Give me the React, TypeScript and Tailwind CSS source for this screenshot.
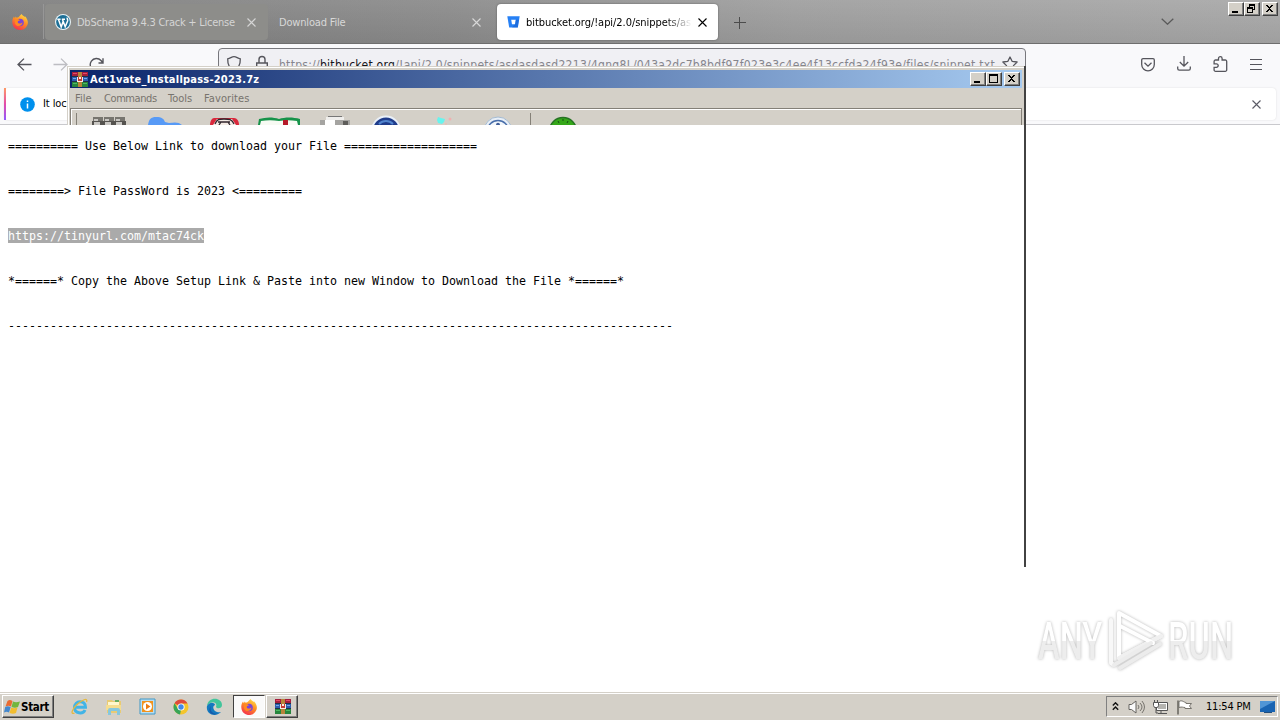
import React from "react";

const ui = "font-['DejaVu_Sans_Condensed','DejaVu_Sans',sans-serif]";

function Firefox({ size }: { size: number }) {
  return (
    <svg width={size} height={size} viewBox="0 0 16 16" className="shrink-0">
      <defs>
        <linearGradient id="fx" x1="0.8" y1="0" x2="0.3" y2="1">
          <stop offset="0" stopColor="#ffe14a" />
          <stop offset="0.45" stopColor="#ff9022" />
          <stop offset="1" stopColor="#f5304e" />
        </linearGradient>
      </defs>
      <path d="M8 1.6 9.6 0c.5 1.3 1.8 1.7 2.8 2.8 0 0 .6 0 .6-.6 3.5 3.7 3.8 8 1 11A7.7 7.7 0 0 1 .8 11C-.2 8 .2 5 2 2.5l.8 1.7 1-1.7.8 1.3C5.500 3.500 7 3.500 8 1.600Z" fill="url(#fx)" />
      <circle cx="8" cy="8.500" r="3.800" fill="#7b45d6" />
      <path d="M3 6c2-1.800 4-1 5 .5-1.500 0-2.500.8-2.200 2 .4 1.500 3.400 1.500 4.600-.2.300 3-3.400 4.700-5.800 3.200C3 10.500 2.500 8 3 6Z" fill="#ff8a20" />
    </svg>
  );
}

function Wordpress() {
  return (
    <svg width="16" height="16" viewBox="0 0 16 16" className="shrink-0">
      <circle cx="8" cy="8" r="8" fill="#e8f4f8" />
      <circle cx="8" cy="8" r="6.900" fill="#1d6f96" />
      <path d="M2.300 5.200h3.300M6.800 5.200h3.200M3.400 5.200 6.200 13 8.200 7.200M7.400 5.200l2.800 7.600L12.600 7c.5-1.500-.6-2-.4-3.400" fill="none" stroke="#fff" strokeWidth="1.500" />
    </svg>
  );
}

function Bitbucket() {
  return (
    <svg width="13" height="12" viewBox="0 0 13 12" className="shrink-0">
      <path d="M.3.300h12.400l-1.900 11.200H2.200Z" fill="#2680f5" />
      <path d="M4.200 3.800h4.600L8 8.200H5Z" fill="#fff" />
      <path d="M8.800 3.800h3.200l-1.200 7.700H5L8 8.200Z" fill="#1259c8" opacity=".5" />
    </svg>
  );
}

function Cross({ className = "" }: { className?: string }) {
  return (
    <svg width="9" height="9" viewBox="0 0 9 9" className={`shrink-0 ${className}`}>
      <path d="m.500.500 8 8M8.500.500l-8 8" fill="none" stroke="currentColor" strokeWidth="1.100" />
    </svg>
  );
}

function WinButton({ kind }: { kind: "min" | "max" | "restore" | "close" }) {
  return (
    <span className="block h-[14px] w-4 border border-t-white border-l-white border-r-[#404040] border-b-[#404040] bg-[#d4d0c8] shadow-[inset_-1px_-1px_0_#808080]">
      <svg width="14" height="12" viewBox="0 0 14 12" shapeRendering="crispEdges">
        {kind === "min" && <path d="M3 8h6v2H3z" />}
        {kind === "max" && <path d="M2 1h9v9H2zM3 3v6h7V3z" fillRule="evenodd" />}
        {kind === "restore" && <path fillRule="evenodd" d="M4 1h6v6H8v3H2V4h2zM5 3v1h3v2h1V3zM3 6v3h4V6z" />}
        {kind === "close" && <path d="M3 2h2v1h1v1h1V3h1V2h2v1H9v1H8v1H7v1h1v1h1v1h1v1H8V8H7V7H6v1H5v1H3V8h1V7h1V6h1V5H5V4H4V3H3z" />}
      </svg>
    </span>
  );
}

function WinRar({ w, h }: { w: number; h: number }) {
  return (
    <svg width={w} height={h} viewBox="0 0 16 15" className="shrink-0" shapeRendering="crispEdges">
      <path d="M0 0h16v5H0z" fill="#a51d3c" />
      <path d="M0 5h16v5H0z" fill="#2a5eaf" />
      <path d="M0 10h16v5H0z" fill="#26853d" />
      <path d="M1 1h4v1H1zM11 1h4v1h-4z" fill="#e44b65" />
      <path d="M1 6h3v1H1zM12 6h3v1h-3z" fill="#79a6e6" />
      <path d="M1 11h4v1H1zM11 11h4v1h-4z" fill="#4fb960" />
      <path d="M0 4h16v1H0zM0 9h16v1H0z" fill="#222f45" />
      <path d="M6 0h4v15H6z" fill="#b8843a" />
      <path d="M5 5h6v5H5z" fill="#c33a35" />
      <path d="M5 5h1v4h4V5h1v5H5zM7 5h2v2H7z" fill="#f8ece4" />
    </svg>
  );
}

function BrowserTabs() {
  return (
    <div className="flex h-[44px] shrink-0 border-b border-[#6e6e6e] bg-[linear-gradient(180deg,rgba(255,255,255,0.06),rgba(0,0,0,0.06)),linear-gradient(90deg,#808080_0%,#8c8c8c_35%,#a0a0a0_62%,#a9a9a9_100%)]">
      <div className="flex w-[43px] shrink-0 items-center pl-3"><Firefox size={16} /></div>
      <div className="my-1 w-px shrink-0 bg-[#979797]" />
      <div className="mt-1 ml-px flex h-9 w-[223px] shrink-0 items-center rounded-sm bg-[#8d8d8a] pl-[10px] text-[#d5d5d5]">
        <Wordpress />
        <span className={`${ui} mt-[2px] ml-[6px] w-[159px] text-[11px] tracking-[-0.25px] whitespace-nowrap`}>DbSchema 9.4.3 Crack + License</span>
        <Cross className="ml-[11px]" />
      </div>
      <div className="mt-1 flex h-9 w-[229px] shrink-0 items-center pl-[11px] text-[#d8d8d8]">
        <span className={`${ui} mt-[2px] w-[193px] text-[11px] tracking-[-0.18px]`}>Download File</span>
        <Cross />
      </div>
      <div className="mt-1 flex h-9 w-[221px] shrink-0 items-center rounded bg-white pl-[10px] shadow-[0_0_2px_#555]">
        <Bitbucket />
        <span className={`${ui} mt-[2px] ml-[6px] w-[166px] bg-[linear-gradient(90deg,#000_84%,#fff_100%)] bg-clip-text text-[11px] tracking-[-0.05px] whitespace-nowrap text-transparent`}>bitbucket.org/!api/2.0/snippets/as</span>
        <Cross className="ml-[6px] text-black" />
      </div>
      <svg width="12" height="12" viewBox="0 0 12 12" className="mt-[17px] ml-4 shrink-0"><path d="M0 5.500h12M5.500 0v12" stroke="#4c4c4c" /></svg>
      <svg width="13" height="7" viewBox="0 0 13 7" className="mt-[18px] ml-[415px] shrink-0"><path d="m.7.700 5.800 5.500L12.300.700" fill="none" stroke="#5a5a5a" strokeWidth="1.300" /></svg>
      <div className="mt-[2px] ml-[54px] flex"><WinButton kind="min" /><WinButton kind="restore" /><span className="w-[2px]" /><WinButton kind="close" /></div>
    </div>
  );
}

function NavigationBar() {
  return (
    <div className="flex h-11 shrink-0 bg-[#f9f9fb] text-[#55555c]">
      <svg width="15" height="13" viewBox="0 0 15 13" className="mt-[14px] ml-[17px] shrink-0"><path d="M14.500 6.500H1M7 .600 1 6.500l6 5.900" fill="none" stroke="currentColor" strokeWidth="1.300" /></svg>
      <svg width="15" height="13" viewBox="0 0 15 13" className="mt-[14px] ml-[21px] shrink-0"><path d="M.500 6.500H14M8 .600l6 5.900-6 5.900" fill="none" stroke="#bdbdc2" strokeWidth="1.300" /></svg>
      <svg width="16" height="16" viewBox="0 0 16 16" className="mt-[13px] ml-[21px] shrink-0"><path d="M13.500 9A6.200 6.200 0 1 1 12 3.500L14 6M14 1.200V6H9.500" fill="none" stroke="currentColor" strokeWidth="1.400" /></svg>
      <div className="mt-1 ml-[113px] flex h-8 w-[808px] shrink-0 rounded border border-[#77777c] bg-[#f0f0f4]">
        <svg width="16" height="17" viewBox="0 0 16 17" className="mt-[6px] ml-[7px] shrink-0"><path d="M8 1.600c2.500 0 3.500 1.800 6.300 2.200C14.500 10 12 13.800 8 16 4 13.800 1.500 10 1.700 3.800 4.500 3.400 5.500 1.600 8 1.600Z" fill="none" stroke="currentColor" strokeWidth="1.300" /></svg>
        <svg width="12" height="16" viewBox="0 0 12 16" className="mt-[6px] ml-[14px] shrink-0"><path d="M3 8V4.500a3 3 0 0 1 6 0V8M.700 8h10.600v7H.700z" fill="none" stroke="currentColor" strokeWidth="1.400" /></svg>
        <span className={`${ui} mt-[8px] ml-[11px] w-[718px] shrink-0 text-[12px] leading-4 tracking-[0.28px] whitespace-nowrap text-[#85858c]`}>https://<b className="font-normal text-[#15141a]">bitbucket.org</b>/!api/2.0/snippets/asdasdasd2213/4qnq8L/043a2dc7b8bdf97f023e3c4ee4f13ccfda24f93e/files/snippet.txt</span>
        <svg width="16" height="16" viewBox="0 0 16 16" className="mt-[7px] ml-[5px] shrink-0"><path d="m8 1 2.100 4.300 5 .7-3.600 3.600.8 5L8 12.200l-4.300 2.400.8-5L.900 6l5-.7Z" fill="none" stroke="currentColor" strokeWidth="1.300" strokeLinejoin="round" /></svg>
      </div>
      <div className="mt-3 ml-[115px] flex h-4 items-start">
        <svg width="14" height="14" viewBox="0 0 14 14" className="mt-[2px]"><path d="M2 .700h10A1.300 1.300 0 0 1 13.300 2v4.500A6.300 6.300 0 0 1 .700 6.500V2A1.300 1.300 0 0 1 2 .700ZM3.500 4.800 7 8.200l3.500-3.400" fill="none" stroke="currentColor" strokeWidth="1.300" /></svg>
        <svg width="14" height="15" viewBox="0 0 14 15" className="ml-[22px]"><path d="M7 0v10M2.800 6 7 10.200 11.200 6M.700 10.500v2a1.600 1.600 0 0 0 1.600 1.600h9.400a1.600 1.600 0 0 0 1.600-1.600v-2" fill="none" stroke="currentColor" strokeWidth="1.300" /></svg>
        <svg width="15" height="16" viewBox="0 0 15 16" className="ml-[22px]"><path d="M5.500 4V2.500a1.800 1.800 0 0 1 3.600 0V4h3.200A1.400 1.400 0 0 1 13.700 5.400v8.500a1.400 1.400 0 0 1-1.400 1.400H2.500a1.400 1.400 0 0 1-1.400-1.400v-2.600H3.500a1.700 1.700 0 0 0 0-3.400H1.100V5.400A1.400 1.400 0 0 1 2.500 4Z" fill="none" stroke="currentColor" strokeWidth="1.300" /></svg>
        <svg width="12" height="11" viewBox="0 0 12 11" className="mt-[3px] ml-[22px]"><path d="M0 .500h12M0 5.500h12M0 10.500h12" stroke="currentColor" /></svg>
      </div>
    </div>
  );
}

function NoticeBar() {
  return (
    <div className="h-[37px] shrink-0 border-b border-[#c9c9cd] bg-[#f9f9fb] px-1">
      <div className="flex h-8 items-center rounded bg-white shadow-[0_0_2px_#ddd]">
        <span className="h-full w-[2px] bg-[linear-gradient(#ff9a65,#e34ba9,#9059ff)]" />
        <svg width="15" height="15" viewBox="0 0 15 15" className="ml-[14px]"><circle cx="7.500" cy="7.500" r="7.300" fill="#0090ed" /><path d="M7.500 6.500v5M7.500 3.500v1.500" stroke="#fff" strokeWidth="1.500" /></svg>
        <span className={`${ui} ml-[8px] text-[11px] tracking-[-0.1px] text-black`}>It loc</span>
        <Cross className="mr-[15px] ml-auto text-[#5b5b66]" />
      </div>
    </div>
  );
}

function ArchiveToolbar() {
  return (
    <div className="mr-[2px] ml-[2px] flex h-[17px] items-start overflow-hidden border-t border-r border-l border-[#848078] bg-[#d4d0c8] pl-[5px] shadow-[inset_1px_1px_0_#fff]">
      <span className="mt-1 h-4 w-px bg-[#858178]" />
      <svg width="34" height="16" viewBox="0 0 34 16" className="ml-[15px]">
        <path d="M1 8h10v4H1zM12 8h10v4H12zM23 8h10v4H23z" fill="#77756f" />
        <path d="M0 12h34v4H0z" fill="#55534f" />
        <path d="M2 10h4v2H2zM13 10h4v2h-4zM24 10h4v2h-4zM2 13h6v3H2zM13 13h6v3h-6zM24 13h6v3h-6z" fill="#c9c7c3" />
      </svg>
      <svg width="36" height="16" viewBox="0 0 36 16" className="ml-[22px]">
        <path d="M0 16C1 10 3 8 8 8c6 0 8 2 9 5l4 1c6-1 10-1 13 2Z" fill="#579af6" />
      </svg>
      <svg width="30" height="16" viewBox="0 0 30 16" className="ml-[26px]">
        <path d="M0 16c0-4 2-7 4-7h20c3 0 5 3 5 7Z" fill="#d9283c" />
        <path d="m3 16 4-6h15l4 6Z" fill="#f4ebe5" />
        <path d="M5 15c2-5 4-5 9-5s8 0 10 5M8 13h12M9 16l2-3M20 16l-2-3" fill="none" stroke="#30252c" strokeWidth="1.300" />
      </svg>
      <svg width="43" height="16" viewBox="0 0 43 16" className="ml-[18px]">
        <path d="M0 16 1 10c7-2 14-2 20 0 6-2 14-2 21 0v6Z" fill="#16934a" />
        <path d="m2 16 1-4c6-1 12-1 18 0 6-1 12-1 18 0l1 4Z" fill="#f7faf3" />
        <path d="M25 11h5v5h-5z" fill="#b61929" />
      </svg>
      <svg width="32" height="16" viewBox="0 0 32 16" className="ml-[18px]">
        <path d="M9 7h14v1H9z" fill="#777" />
        <path d="M7 8h18v3H7z" fill="#efeeec" />
        <path d="M1 11h30v5H1z" fill="#a5a4a1" />
        <path d="M6 11h10v5H6z" fill="#fff" />
        <path d="M24 12h5v4h-5z" fill="#5e5d5a" />
      </svg>
      <svg width="30" height="16" viewBox="0 0 30 16" className="ml-[20px]">
        <circle cx="15" cy="21.500" r="14" fill="#1f3c8b" stroke="#e9f0f8" strokeWidth="2" />
        <path d="M8 15c4-4 10-4 14 0" fill="none" stroke="#5285ce" strokeWidth="2" />
      </svg>
      <svg width="30" height="16" viewBox="0 0 30 16" className="ml-[33px]">
        <path d="m4 8 3 1 4 1-1 3-2 2-4-1-1-3Z" fill="#68f4ee" />
        <circle cx="16" cy="10" r="1.500" fill="#f0b0b0" />
        <circle cx="12" cy="15" r="1" fill="#eac0b5" />
      </svg>
      <svg width="32" height="16" viewBox="0 0 32 16" className="ml-[18px]">
        <circle cx="16" cy="22" r="14" fill="#e8eff7" stroke="#a5bbd2" />
        <circle cx="16" cy="22" r="10.500" fill="#f1f6fb" stroke="#486eaa" strokeWidth="1.500" />
        <path d="M14 16c0-3 4-3 4 0" fill="#405f99" />
      </svg>
      <span className="mt-1 ml-[16px] h-4 w-px bg-[#858178]" />
      <svg width="32" height="16" viewBox="0 0 32 16" className="ml-[16px]">
        <circle cx="16" cy="22" r="13.500" fill="#35a719" stroke="#267324" strokeWidth="1.500" />
        <path d="M16 10v2M11 12l1 2M21 12l-1 2" stroke="#174c16" />
      </svg>
    </div>
  );
}

function ArchiveWindow() {
  return (
    <div className="absolute top-[66px] left-[67px] h-[501px] w-[959px] border-r-2 border-[#424242]">
      <div className="h-[59px] overflow-hidden border-t border-l border-[#d4d0c8] bg-[#d4d0c8] shadow-[inset_1px_1px_0_#fff]">
        <div className="mt-[3px] mr-[2px] ml-[2px] flex h-[18px] items-center bg-[linear-gradient(90deg,#0a246a,#a6caf0)] pl-[2px]">
          <WinRar w={16} h={15} />
          <span className={`${ui} mt-px ml-[2px] flex-1 text-[11px] leading-[16px] font-bold tracking-[0.22px] text-white`}>Act1vate_Installpass-2023.7z</span>
          <WinButton kind="min" /><WinButton kind="max" /><span className="w-[2px]" /><WinButton kind="close" /><span className="w-[2px]" />
        </div>
        <div className={`${ui} flex h-5 items-center pt-[2px] pl-[7px] text-[11px] text-[#77736d]`}>
          <span className="w-[29px]">File</span><span className="w-[64px] tracking-[-0.42px]">Commands</span><span className="w-[36px]">Tools</span><span className="tracking-[0.1px]">Favorites</span>
        </div>
        <ArchiveToolbar />
      </div>
    </div>
  );
}

function Snippet() {
  return (
    <pre className="m-0 min-h-0 flex-1 bg-white pt-[14px] pl-2 font-['DejaVu_Sans_Mono',monospace] text-[11.63px] leading-[15px] text-black">
      {"========== Use Below Link to download your File ===================\n\n\n========> File PassWord is 2023 <=========\n\n\n"}
      <span className="bg-[linear-gradient(#aaa,#aaa)] bg-[length:100%_15px] bg-top bg-no-repeat pt-px pb-[2px] text-white">https://tinyurl.com/mtac74ck</span>
      {"\n\n\n*======* Copy the Above Setup Link & Paste into new Window to Download the File *======*\n\n\n" + "-".repeat(95)}
    </pre>
  );
}

function WatermarkWord({ children }: { children: string }) {
  return (
    <span className="inline-block origin-left scale-x-[.64] bg-[linear-gradient(#fff_50%,#ededed_50%)] bg-clip-text font-['Roboto',sans-serif] text-[51px] leading-none font-medium whitespace-nowrap text-transparent">
      {children}
    </span>
  );
}

function Watermark() {
  return (
    <div className="absolute top-[606px] left-[1038px] flex h-[70px] w-[204px] items-center [filter:drop-shadow(0_0_1.5px_#b5b5b5)]">
      <div className="w-[66px] shrink-0"><WatermarkWord>ANY</WatermarkWord></div>
      <svg width="60" height="66" viewBox="0 0 60 66" className="shrink-0" fill="none" stroke="#fff" strokeWidth="4" strokeLinejoin="round" strokeLinecap="round">
        <path d="M7 12v43l3 2" stroke="#f8f8f8" />
        <path d="M15 50V5l42 23-42 22" />
        <path d="M15 50 57 28" stroke="#f0f0f0" />
        <path d="m16 18 33 17" />
        <path d="m16 60 40-24M10 57l37-22" stroke="#ececec" />
      </svg>
      <div className="ml-[4px] w-[72px] shrink-0"><WatermarkWord>RUN</WatermarkWord></div>
    </div>
  );
}

function Taskbar() {
  return (
    <div className="flex h-7 shrink-0 items-center border-t border-[#d4d0c8] bg-[#d4d0c8] shadow-[inset_0_1px_0_#fff]">
      <div className="ml-[2px] flex h-[23px] w-[52px] items-center border border-t-white border-l-white border-r-[#404040] border-b-[#404040] pl-px shadow-[inset_-1px_-1px_0_#808080]">
        <svg width="16" height="16" viewBox="0 0 16 16" className="shrink-0"><path d="M3.500 2c2-1.500 3-1 5 0L7 7.500c-2-1-3-1-5.500 0Z" fill="#e96b32" /><path d="M9 2.500c2 1 4 1 7 0L14 8c-2 1-4 1-6.500 0Z" fill="#72b63e" /><path d="M1.200 8c2-1 3-1 5.500 0L5 13.500c-2-1-3-1-5 0Z" fill="#4488ce" /><path d="M7.200 8.500c2 1 4 1 6.300 0l-1.500 5.500c-2 1-4 1-6.500 0Z" fill="#f2bd2f" /></svg>
        <span className={`${ui} mt-[2px] ml-px text-[11.5px] font-bold tracking-[-0.3px]`}>Start</span>
      </div>
      <svg width="18" height="18" viewBox="0 0 18 18" className="ml-[17px] shrink-0"><path d="M3.500 9.300h11C14.500 1.500 3.500 2 3.500 9.600c0 6.200 8.500 7 10.500 2.400" fill="none" stroke="#42b4e6" strokeWidth="3" /><path d="M15.500 4c2-5-5-2-10 3s-6 10-2 8" fill="none" stroke="#e5b83e" strokeWidth="1.300" /></svg>
      <svg width="18" height="18" viewBox="0 0 18 18" className="ml-[16px] shrink-0"><path d="M2 2h5l1 1h8v12H2z" fill="#e9cb74" /><path d="M3 4h11v3H3z" fill="#fff7cd" /><path d="M10 3h4" stroke="#68ac62" strokeWidth="2" /><path d="M1 7h15v5H1z" fill="#f5dd90" /><path d="M3 17v-5q0-2 2-2h8q2 0 2 2v5h-3v-4H6v4Z" fill="#86c7de" /></svg>
      <svg width="17" height="17" viewBox="0 0 17 17" className="ml-[16px] shrink-0"><path d="M1 1h15v15H1z" fill="#b9def2" stroke="#4198c6" /><path d="M3 3h11v11H3z" fill="#f1931e" /><circle cx="8.500" cy="8.500" r="4.500" fill="#fff" /><path d="m7 5.500 4.500 3L7 11.500z" fill="#ed7c11" /></svg>
      <svg width="16" height="16" viewBox="0 0 16 16" className="ml-[17px] shrink-0"><circle cx="8" cy="8" r="7.500" fill="#f4c52c" /><path d="M8 8 1.500 4.200A7.500 7.500 0 0 1 14.500 4.500H8Z" fill="#de4a3d" /><path d="M1.500 4.200 5 10l3 1-1 4.400A7.500 7.500 0 0 1 1.500 4.200Z" fill="#38a559" /><circle cx="8" cy="8" r="3.600" fill="#fff" /><circle cx="8" cy="8" r="2.700" fill="#4289e9" /></svg>
      <svg width="17" height="17" viewBox="0 0 17 17" className="ml-[17px] shrink-0"><path d="M1 8C2-2 16-1 16 7c0 4-5 4-6 2 2-5-5-7-9-1Z" fill="#42c59b" /><path d="M1 8c3-5 8-3 8-1-3 1-2 6 2 7 2 .5 4 0 4 0C9 20-.5 16 1 8Z" fill="#1479bf" /><path d="M5 8c-2 5 2 8 6 8-6 2-10-3-6-8Z" fill="#1858a8" /></svg>
      <div className="ml-[10px] flex h-[23px] w-8 shrink-0 items-center justify-center border border-t-[#404040] border-l-[#404040] border-r-white border-b-white bg-[#fafafa]"><Firefox size={16} /></div>
      <div className="ml-px flex h-[23px] w-8 shrink-0 items-center justify-center border border-t-white border-l-white border-r-[#404040] border-b-[#404040] shadow-[inset_-1px_-1px_0_#808080]"><WinRar w={17} h={15} /></div>
      <div className="mr-[2px] ml-auto flex h-[21px] w-[172px] items-center border border-t-[#808080] border-l-[#808080] border-r-white border-b-white">
        <svg width="7" height="9" viewBox="0 0 7 9" className="ml-[5px] shrink-0"><path d="m.800 3.500 2.700-2.700 2.700 2.700M.800 7.800l2.700-2.700 2.700 2.700" fill="none" stroke="#111" strokeWidth="1.400" /></svg>
        <svg width="17" height="16" viewBox="0 0 17 16" className="ml-[9px] shrink-0"><path d="M1 5.500h2.500L8 2v12l-4.500-3.500H1Z" fill="#fafafa" stroke="#65635f" /><path d="M10 6q2 2 0 4M12 4q4 4 0 8M14 2q5 6 0 12" fill="none" stroke="#77746e" /></svg>
        <svg width="17" height="16" viewBox="0 0 17 16" className="ml-[7px] shrink-0"><path d="M4.500 3.500h11v8h-11z" fill="#fff" stroke="#555" /><path d="M6 5h8v5H6z" fill="#b5b4b0" /><path d="M9 12v2M6 14.500h9" fill="none" stroke="#555" /><path d="M1.500 3.500h5v3l-1 2h-3l-1-2z" fill="#fff" stroke="#555" /><path d="M2.500 1v2M5.500 1v2M4 9v5h2" fill="none" stroke="#555" /></svg>
        <svg width="17" height="16" viewBox="0 0 17 16" className="ml-[7px] shrink-0"><path d="M3 2.500c3-2 5 1 7 1v1h5.500l-2 2.500 2 2.500H9v-1c-2 0-3-1-6 0Z" fill="#fff" stroke="#77746e" /><path d="M2 1.500v14" stroke="#66635d" strokeWidth="1.500" /></svg>
        <span className={`${ui} mt-[2px] ml-[13px] w-[48px] shrink-0 text-[11px] tracking-[-0.2px] whitespace-nowrap`}>11:54 PM</span>
        <svg width="16" height="14" viewBox="0 0 16 14" className="ml-[6px] shrink-0"><path d="M0 1h15v11H0z" fill="#1964b2" /><path d="M0 1h15L0 9z" fill="#5095d5" /><path d="M4 12.500h8" stroke="#244e7c" /></svg>
      </div>
    </div>
  );
}

export default function App() {
  return (
    <div className="relative flex h-[720px] w-[1280px] flex-col overflow-hidden bg-white">
      <BrowserTabs />
      <NavigationBar />
      <NoticeBar />
      <Snippet />
      <Taskbar />
      <ArchiveWindow />
      <Watermark />
    </div>
  );
}
